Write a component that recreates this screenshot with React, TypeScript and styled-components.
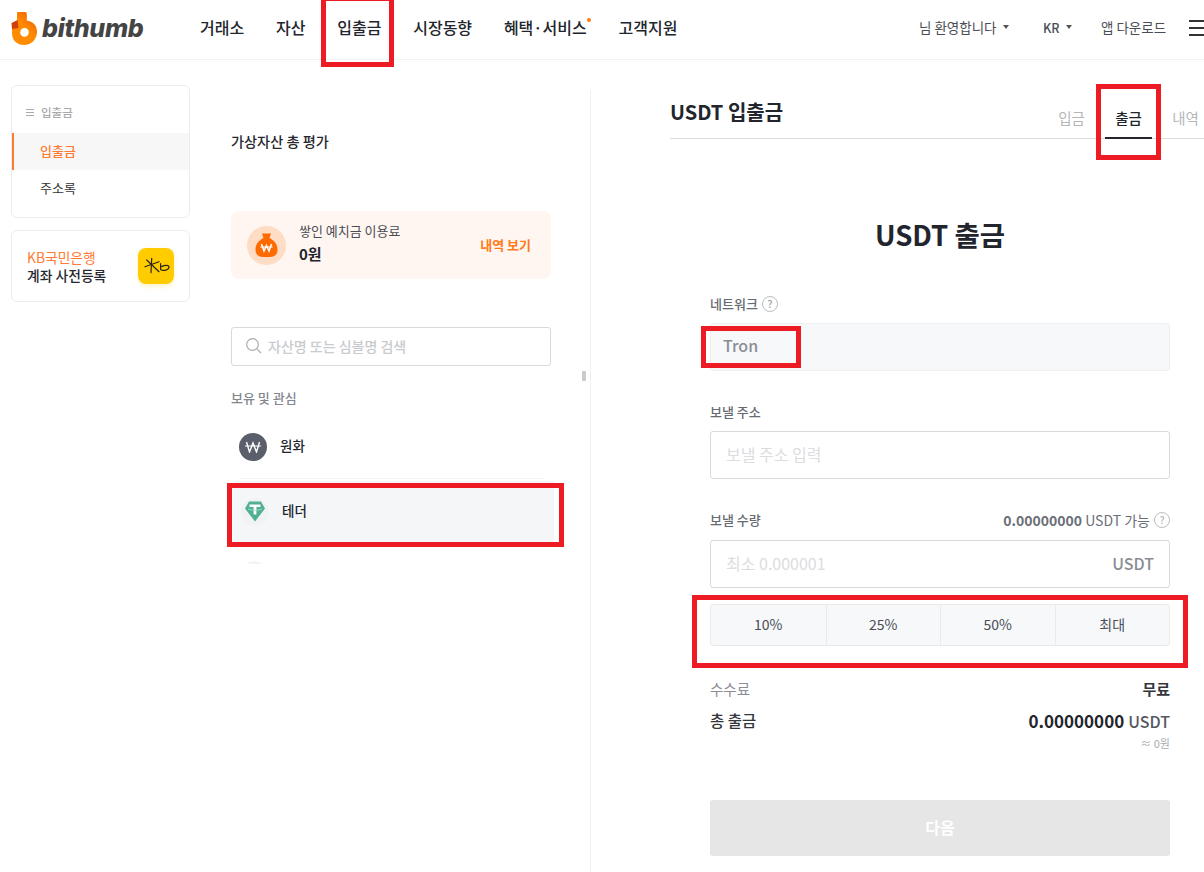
//This file recreates the bithumb USDT withdrawal page with its red annotation boxes
import styled, { createGlobalStyle } from "styled-components";

const GlobalStyle = createGlobalStyle`
  html, body {
    margin: 0;
    padding: 0;
    background: #fff;
    overflow: hidden;
  }
  body {
    font-family: "Noto Sans CJK KR", "Noto Sans", sans-serif;
    color: #1f2229;
  }
  * { box-sizing: border-box; }
`;

// Top most container, wider than the window so the right side gets cut off
const Page = styled.div`
  width: 1204px;
  height: 872px;
  overflow: hidden;
  position: relative;
`;

const Inner = styled.div`
  width: 1240px;
`;

// Red box drawn over the screenshot, placed relative to the thing it marks
const Highlight = styled.div<{ $inset: string }>`
  position: absolute;
  inset: ${(p) => p.$inset};
  border: 5px solid #ed1c24;
  pointer-events: none;
`;

/* ---------- header ---------- */
const Header = styled.header`
  height: 60px;
  display: flex;
  align-items: center;
  border-bottom: 1px solid #f2f2f2;
  padding-left: 11px;
`;

const LogoLink = styled.div`
  width: 189px;
  display: flex;
  align-items: center;
  gap: 5px;
  margin-top: -2px;
`;

const LogoText = styled.span`
  font-family: Inter, sans-serif;
  font-style: italic;
  font-weight: 800;
  font-size: 25px;
  letter-spacing: -0.3px;
  color: #444;
  line-height: 1;
`;

const Nav = styled.nav`
  display: flex;
  gap: 31.8px;
  flex: 1;
  margin-top: -6px;
`;

const NavItem = styled.div`
  position: relative;
  font-size: 16px;
  font-weight: 500;
  line-height: 20px;
  color: #22252c;
`;

const NewDot = styled.span`
  position: absolute;
  right: -4px;
  top: 1px;
  width: 4px;
  height: 4px;
  border-radius: 50%;
  background: #ff7a1a;
`;

const HeaderRight = styled.div`
  display: flex;
  align-items: center;
  margin-top: -5px;
  width: 321px;
`;

const HeaderLink = styled.div<{ $width: number; $bold?: boolean }>`
  width: ${(p) => p.$width}px;
  display: flex;
  align-items: center;
  gap: 6px;
  font-size: ${(p) => (p.$bold ? "12.5px" : "13.5px")};
  font-weight: ${(p) => (p.$bold ? 500 : 400)};
  color: #4a4d55;
  white-space: nowrap;
`;

const Caret = styled.span`
  width: 0;
  height: 0;
  border-left: 3px solid transparent;
  border-right: 3px solid transparent;
  border-top: 4px solid #555;
`;

const Hamburger = styled.div`
  width: 20px;
  height: 16px;
  margin-left: -6px;
  margin-top: 2px;
  display: flex;
  flex-direction: column;
  justify-content: space-between;
  span {
    height: 2px;
    background: #333;
  }
`;

/* ---------- body columns ---------- */
const Body = styled.div`
  display: flex;
  height: 812px;
`;

const Sidebar = styled.aside`
  width: 179px;
  margin: 25px 0 0 11px;
  display: flex;
  flex-direction: column;
  gap: 12px;
  flex-shrink: 0;
`;

const SideCard = styled.div`
  height: 133px;
  border: 1px solid #ececec;
  border-radius: 6px;
  padding-top: 17px;
`;

const SideTitle = styled.div`
  display: flex;
  align-items: center;
  gap: 7px;
  height: 20px;
  padding: 0 0 2px 14px;
  font-size: 11.5px;
  font-weight: 500;
  color: #aaa;
  margin-bottom: 10px;
`;

const SideTitleIcon = styled.span`
  width: 8px;
  height: 7px;
  border-top: 1px solid #aaa;
  border-bottom: 1px solid #aaa;
  position: relative;
  &::after {
    content: "";
    position: absolute;
    left: 0;
    right: 0;
    top: 2px;
    height: 1px;
    background: #aaa;
  }
`;

const SideItem = styled.div<{ $active?: boolean }>`
  height: 37px;
  display: flex;
  align-items: center;
  padding-bottom: 2px;
  padding-left: ${(p) => (p.$active ? "26px" : "28px")};
  font-size: 13px;
  font-weight: ${(p) => (p.$active ? 500 : 400)};
  color: ${(p) => (p.$active ? "#ff7a33" : "#333")};
  background: ${(p) => (p.$active ? "#f7f7f7" : "transparent")};
  border-left: ${(p) => (p.$active ? "2px solid #ff7a33" : "none")};
`;

const BankCard = styled.div`
  height: 72px;
  border: 1px solid #ececec;
  border-radius: 6px;
  display: flex;
  align-items: center;
  justify-content: space-between;
  padding: 0 15px;
`;

const BankText = styled.div`
  font-size: 13.8px;
  line-height: 18px;
  font-weight: 500;
  color: #26282e;
  span {
    display: block;
    color: #ff7a33;
    font-weight: 400;
  }
`;

const BankLogo = styled.div`
  width: 36px;
  height: 36px;
  border-radius: 8px;
  background: #ffcc00;
  box-shadow: 0 2px 5px rgba(255, 204, 0, 0.25);
`;

const Middle = styled.section`
  width: 359px;
  margin-left: 41px;
  flex-shrink: 0;
  padding-top: 72px;
  position: relative;
`;

const MiddleInner = styled.div`
  width: 320px;
`;

const TotalLabel = styled.div`
  height: 20px;
  line-height: 18px;
  font-size: 14.2px;
  font-weight: 500;
  color: #26282e;
`;

const FeeCard = styled.div`
  margin-top: 59px;
  height: 68px;
  border-radius: 8px;
  background: #fff6f1;
  display: flex;
  align-items: center;
  padding: 0 20px 0 16px;
`;

const FeeIcon = styled.div`
  width: 39px;
  height: 39px;
  border-radius: 50%;
  background: #ffdcc4;
  display: flex;
  align-items: center;
  justify-content: center;
  margin-right: 13px;
`;

const FeeText = styled.div`
  flex: 1;
  margin-top: -4px;
`;

const FeeLabel = styled.div`
  font-size: 13px;
  line-height: 18px;
  color: #4a4d55;
`;

const FeeValue = styled.div`
  font-size: 15px;
  line-height: 22px;
  margin-top: 3px;
  font-weight: 700;
  color: #22252c;
`;

const FeeLink = styled.div`
  font-size: 13px;
  font-weight: 700;
  color: #ff7a1a;
  margin-top: -2px;
`;

const SearchBox = styled.div`
  margin-top: 48px;
  height: 39px;
  border: 1px solid #d9dadd;
  border-radius: 3px;
  display: flex;
  align-items: center;
  gap: 5px;
  padding: 0 0 1px 13px;
  font-size: 14px;
  font-weight: 500;
  color: #c9cbcf;
`;

const SectionLabel = styled.div`
  margin-top: 22px;
  height: 20px;
  line-height: 20px;
  font-size: 13px;
  font-weight: 500;
  color: #84878e;
`;

// The list is a little wider than the column so the selected row can stick out
const CoinList = styled.div`
  width: 330px;
  height: 156px;
  overflow: hidden;
  padding-top: 7px;
`;

const CoinRow = styled.div<{ $active?: boolean }>`
  position: relative;
  height: ${(p) => (p.$active ? "63px" : "64px")};
  display: flex;
  align-items: center;
  gap: 13px;
  margin-left: ${(p) => (p.$active ? "2px" : "8px")};
  width: ${(p) => (p.$active ? "321px" : "305px")};
  padding: ${(p) => (p.$active ? "0 0 2px 8px" : "0")};
  background: ${(p) => (p.$active ? "#f5f6f8" : "transparent")};
  border-bottom: ${(p) => (p.$active ? "none" : "1px solid #f3f3f3")};
  margin-bottom: ${(p) => (p.$active ? "0" : "2px")};
`;

const CoinIcon = styled.div<{ $bg: string }>`
  width: 28px;
  height: 28px;
  border-radius: 50%;
  background: ${(p) => p.$bg};
  display: flex;
  align-items: center;
  justify-content: center;
  flex-shrink: 0;
`;

const CoinName = styled.div`
  font-size: 13.5px;
  font-weight: 500;
  color: #22252c;
  margin-top: -3px;
`;

const NextCoin = styled.div`
  margin: 17px 0 0 11px;
  width: 24px;
  height: 24px;
  border-radius: 50%;
  background: #f4f4f4;
`;

const ScrollThumb = styled.div`
  position: absolute;
  left: 351px;
  top: 311px;
  width: 4px;
  height: 10px;
  background: #ccc;
`;

/* ---------- withdrawal panel ---------- */
const Panel = styled.section`
  width: 620px;
  margin-top: 30px;
  border-left: 1px solid #f0f0f0;
  padding-left: 79px;
  flex-shrink: 0;
`;

const PanelInner = styled.div`
  width: 540px;
`;

const PanelHead = styled.div`
  height: 49px;
  display: flex;
  justify-content: space-between;
  border-bottom: 1px solid #dcdcdc;
`;

const PanelTitle = styled.h2`
  margin: 0;
  font-size: 20px;
  font-weight: 700;
  line-height: 44px;
  color: #22252c;
`;

const Tabs = styled.div`
  display: flex;
  gap: 10px;
  margin-right: 1px;
`;

const Tab = styled.div<{ $active?: boolean }>`
  position: relative;
  width: 47px;
  height: 49px;
  text-align: center;
  padding-top: 17px;
  line-height: 22px;
  font-size: 14.5px;
  font-weight: ${(p) => (p.$active ? 500 : 400)};
  color: ${(p) => (p.$active ? "#22252c" : "#b5b6ba")};
  border-bottom: ${(p) => (p.$active ? "2px solid #22252c" : "none")};
`;

const Heading = styled.h1`
  margin: 76px 0 0;
  height: 40px;
  line-height: 38px;
  font-size: 27.5px;
  font-weight: 700;
  text-align: center;
  color: #22252c;
`;

const Form = styled.div`
  width: 460px;
  margin: 41px 0 0 40px;
`;

const LabelRow = styled.div<{ $top: number; $gap: number }>`
  margin-top: ${(p) => p.$top}px;
  margin-bottom: ${(p) => p.$gap}px;
  height: 16px;
  display: flex;
  align-items: center;
  justify-content: space-between;
`;

const Label = styled.div`
  display: flex;
  align-items: center;
  gap: 4px;
  font-size: 13px;
  font-weight: 500;
  color: #666a72;
  margin-top: -1px;
`;

const Help = styled.span`
  width: 16px;
  height: 16px;
  border: 1px solid #bcbec3;
  border-radius: 50%;
  display: inline-flex;
  align-items: center;
  justify-content: center;
  font-size: 10px;
  line-height: 1;
  color: #a0a2a7;
`;

const Available = styled.div`
  display: flex;
  align-items: center;
  gap: 4px;
  font-size: 14px;
  color: #6b6f77;
  b {
    font-weight: 700;
  }
`;

const NetworkBox = styled.div`
  height: 48px;
  background: #f7f8fa;
  border: 1px solid #eeeff1;
  border-radius: 3px;
  display: flex;
  align-items: center;
  padding: 0 0 4px 12px;
  font-size: 16px;
  font-weight: 500;
  color: #8a8d94;
`;

const TronValue = styled.span`
  position: relative;
  line-height: 22px;
`;

const InputBox = styled.div`
  height: 48px;
  border: 1px solid #d9dadd;
  border-radius: 3px;
  display: flex;
  align-items: center;
  justify-content: space-between;
  padding: 0 15px 2px;
  font-size: 16px;
  color: #dcdde0;
`;

const Unit = styled.span`
  font-weight: 500;
  color: #8a8d94;
`;

const PercentWrap = styled.div`
  position: relative;
  margin-top: 16px;
`;

const PercentRow = styled.div`
  height: 42px;
  display: grid;
  grid-template-columns: repeat(4, 1fr);
  background: #f7f8fa;
  border: 1px solid #e9eaec;
  border-radius: 3px;
`;

const PercentButton = styled.div`
  display: flex;
  align-items: center;
  justify-content: center;
  padding-bottom: 2px;
  font-size: 14px;
  color: #4a4d55;
  & + & {
    border-left: 1px solid #e9eaec;
  }
`;

const SummaryRow = styled.div<{ $top: number }>`
  margin-top: ${(p) => p.$top}px;
  display: flex;
  justify-content: space-between;
  align-items: center;
  height: 20px;
`;

const FeeTitle = styled.div`
  font-size: 14.5px;
  color: #8a8d94;
`;

const FeeFree = styled.div`
  font-size: 15px;
  font-weight: 700;
  color: #33363c;
`;

const TotalTitle = styled.div`
  font-size: 15.5px;
  font-weight: 500;
  color: #33363c;
`;

const TotalValue = styled.div`
  font-size: 17px;
  font-weight: 700;
  color: #22252c;
  span {
    font-size: 16px;
    font-weight: 500;
    color: #55585f;
    margin-left: 4px;
  }
`;

const Approx = styled.div`
  margin-top: 6px;
  height: 14px;
  line-height: 14px;
  text-align: right;
  font-size: 11px;
  color: #aaacb0;
`;

const NextButton = styled.div`
  margin-top: 50px;
  height: 56px;
  padding-bottom: 2px;
  border-radius: 3px;
  background: #e6e6e6;
  color: #fff;
  font-size: 16px;
  font-weight: 700;
  display: flex;
  align-items: center;
  justify-content: center;
`;

const LogoMark = () => (
  <svg width="26" height="33" viewBox="0 0 26 33">
    <defs>
      <linearGradient id="bithumbMark" x1="0.9" y1="0.1" x2="0.2" y2="1">
        <stop offset="0" stopColor="#e9600a" />
        <stop offset="0.45" stopColor="#ff8a00" />
        <stop offset="1" stopColor="#ff8c00" />
      </linearGradient>
    </defs>
    <path
      fillRule="evenodd"
      fill="url(#bithumbMark)"
      d="M7 0 H14 C15.3 0 15.8 .8 15.8 2 V8.6 C21.8 9.2 26 13.6 26 19.8 C26 27.5 20.5 33 13 33 C5.8 33 1 28.2 1 21 V14.5 L6 11.5 V2 C6 .8 6 0 7 0 Z M13.6 16 C11 16 9.2 18 9.2 20.5 C9.2 23 11 24.8 13.4 24.8 C16 24.8 17.8 22.8 17.8 20.3 C17.8 17.8 16 16 13.6 16 Z"
    />
    <path d="M0.5 11 L6.5 8 L7.5 16 L1 17 Z" fill="#cf3f0c" />
  </svg>
);

const SearchIcon = () => (
  <svg width="18" height="18" viewBox="0 0 18 18" fill="none" stroke="#a9abb0" strokeWidth="1.2">
    <circle cx="7.5" cy="7.5" r="5.8" />
    <path d="M11.8 11.8 L16 16" />
  </svg>
);

const WonIcon = () => (
  <svg width="16" height="12" viewBox="0 0 16 12" fill="none" stroke="#fff" strokeWidth="1.4">
    <path d="M1.5 1 L4.5 11 L8 2 L11.5 11 L14.5 1" />
    <path d="M0 5 H16" strokeWidth="1" />
  </svg>
);

const MoneyBag = () => (
  <svg width="23" height="24" viewBox="0 0 23 24">
    <path
      fill="#ff6a00"
      d="M7 0.5 H16 L14.5 5 C19.5 7.5 22.5 11.5 22.5 16.5 C22.5 21.5 19.5 24 15 24 H8 C3.5 24 0.5 21.5 0.5 16.5 C0.5 11.5 3.5 7.5 8.5 5 Z"
    />
    <path d="M6.5 11 L9 18 L11.5 12.5 L14 18 L16.5 11" fill="none" stroke="#fff" strokeWidth="1.5" />
    <path d="M5.5 14 H17.5" stroke="#fff" strokeWidth="1.1" />
  </svg>
);

const KbMark = () => (
  <svg width="36" height="36" viewBox="0 0 36 36" fill="none" stroke="#2b2417" strokeWidth="1.2" strokeLinecap="round">
    <path d="M7 18.7 L21 13.7" />
    <path d="M13.7 10.3 L13 24.7" />
    <path d="M8.7 12 L21 23.7" />
    <path d="M22.6 15.5 V21.5 C25.5 23.6 31 21.8 31 19 C31 17 27 16.8 23.5 18.6" />
  </svg>
);

const TetherIcon = () => (
  <svg width="20" height="21" viewBox="0 0 20 21">
    <path fill="#50af95" d="M4 0.5 H16 L20 7.5 L10 20.5 L0 7.5 Z" />
    <path fill="#fff" d="M4.5 3.5 H15.5 V6 H11.4 V13.5 H8.6 V6 H4.5 Z" />
    <path d="M3 8 C6 9.6 14 9.6 17 8" fill="none" stroke="#a5dccb" strokeWidth="0.9" />
  </svg>
);

const App = () => {
  return (
    <Page>
      <GlobalStyle />
      <Inner>
        <Header>
          <LogoLink>
            <LogoMark />
            <LogoText>bithumb</LogoText>
          </LogoLink>
          <Nav>
            <NavItem>거래소</NavItem>
            <NavItem>자산</NavItem>
            <NavItem>
              입출금
              <Highlight $inset="-21px -13px -30px -16px" />
            </NavItem>
            <NavItem>시장동향</NavItem>
            <NavItem>
              혜택·서비스
              <NewDot />
            </NavItem>
            <NavItem>고객지원</NavItem>
          </Nav>
          <HeaderRight>
            <HeaderLink $width={124}>
              님 환영합니다 <Caret />
            </HeaderLink>
            <HeaderLink $width={58} $bold>
              KR <Caret />
            </HeaderLink>
            <HeaderLink $width={94}>앱 다운로드</HeaderLink>
            <Hamburger>
              <span />
              <span />
              <span />
            </Hamburger>
          </HeaderRight>
        </Header>

        <Body>
          <Sidebar>
            <SideCard>
              <SideTitle>
                <SideTitleIcon />
                입출금
              </SideTitle>
              <SideItem $active>입출금</SideItem>
              <SideItem>주소록</SideItem>
            </SideCard>
            <BankCard>
              <BankText>
                <span>KB국민은행</span>
                계좌 사전등록
              </BankText>
              <BankLogo>
                <KbMark />
              </BankLogo>
            </BankCard>
          </Sidebar>

          <Middle>
            <MiddleInner>
              <TotalLabel>가상자산 총 평가</TotalLabel>
              <FeeCard>
                <FeeIcon>
                  <MoneyBag />
                </FeeIcon>
                <FeeText>
                  <FeeLabel>쌓인 예치금 이용료</FeeLabel>
                  <FeeValue>0원</FeeValue>
                </FeeText>
                <FeeLink>내역 보기</FeeLink>
              </FeeCard>
              <SearchBox>
                <SearchIcon />
                자산명 또는 심볼명 검색
              </SearchBox>
              <SectionLabel>보유 및 관심</SectionLabel>
              <CoinList>
                <CoinRow>
                  <CoinIcon $bg="#5a5f6b">
                    <WonIcon />
                  </CoinIcon>
                  <CoinName>원화</CoinName>
                </CoinRow>
                <CoinRow $active>
                  <CoinIcon $bg="#f1f2f3">
                    <TetherIcon />
                  </CoinIcon>
                  <CoinName>테더</CoinName>
                </CoinRow>
                <NextCoin />
              </CoinList>
            </MiddleInner>
            <Highlight $inset="423px 26px 325px -4px" />
            <ScrollThumb />
          </Middle>

          <Panel>
            <PanelInner>
              <PanelHead>
                <PanelTitle>USDT 입출금</PanelTitle>
                <Tabs>
                  <Tab>입금</Tab>
                  <Tab $active>
                    출금
                    <Highlight $inset="-6px -9px -23px -9px" />
                  </Tab>
                  <Tab>내역</Tab>
                </Tabs>
              </PanelHead>
              <Heading>USDT 출금</Heading>
              <Form>
                <LabelRow $top={0} $gap={11}>
                  <Label>
                    네트워크 <Help>?</Help>
                  </Label>
                </LabelRow>
                <NetworkBox>
                  <TronValue>
                    Tron
                    <Highlight $inset="-8px -43px -12px -22px" />
                  </TronValue>
                </NetworkBox>

                <LabelRow $top={33} $gap={11}>
                  <Label>보낼 주소</Label>
                </LabelRow>
                <InputBox>보낼 주소 입력</InputBox>

                <LabelRow $top={33} $gap={12}>
                  <Label>보낼 수량</Label>
                  <Available>
                    <span>
                      <b>0.00000000</b> USDT 가능
                    </span>
                    <Help>?</Help>
                  </Available>
                </LabelRow>
                <InputBox>
                  최소 0.000001
                  <Unit>USDT</Unit>
                </InputBox>

                <PercentWrap>
                  <PercentRow>
                    <PercentButton>10%</PercentButton>
                    <PercentButton>25%</PercentButton>
                    <PercentButton>50%</PercentButton>
                    <PercentButton>최대</PercentButton>
                  </PercentRow>
                  <Highlight $inset="-9px -18px -22px -18px" />
                </PercentWrap>

                <SummaryRow $top={32}>
                  <FeeTitle>수수료</FeeTitle>
                  <FeeFree>무료</FeeFree>
                </SummaryRow>
                <SummaryRow $top={12}>
                  <TotalTitle>총 출금</TotalTitle>
                  <TotalValue>
                    0.00000000<span>USDT</span>
                  </TotalValue>
                </SummaryRow>
                <Approx>≈ 0원</Approx>
                <NextButton>다음</NextButton>
              </Form>
            </PanelInner>
          </Panel>
        </Body>
      </Inner>
    </Page>
  );
};

export default App;
